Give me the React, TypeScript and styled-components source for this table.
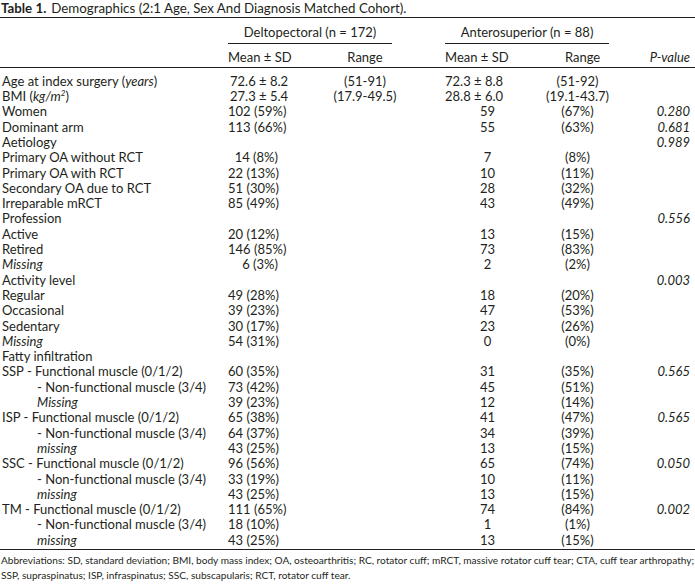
import { ReactNode } from 'react';
import styled, { createGlobalStyle } from 'styled-components';

type Row = {
  label: ReactNode;
  indent?: boolean;
  italic?: boolean;
  dMean?: string;
  dRange?: string;
  aMean?: string;
  aRange?: string;
  p?: string;
  mean?: boolean;
};

const GlobalStyles = createGlobalStyle`
  * {
    box-sizing: border-box;
    margin: 0;
    padding: 0;
  }

  body {
    background: #fff;
    font-family: Lato, 'Open Sans', sans-serif;
    color: #231f20;
  }
`;

const Page = styled.div`
  width: 695px;
`;

const Caption = styled.p`
  font-size: 13.3px;
  line-height: 16px;
  padding-left: 1px;
  margin-bottom: 0.5px;

  b {
    font-weight: 700;
    margin-right: 5px;
  }
`;

const Table = styled.table`
  width: 695px;
  table-layout: fixed;
  border-collapse: collapse;
  font-size: 13px;
  border-top: 1.5px solid #231f20;
  border-bottom: 1.5px solid #231f20;
`;

const GroupHead = styled.th<{ $left: number; $right: number }>`
  font-weight: 400;
  padding: 7px ${(p) => p.$right}px 0 ${(p) => p.$left}px;

  div {
    border-bottom: 1px solid #231f20;
    line-height: 14px;
    padding-bottom: 4px;
    text-align: center;
    white-space: nowrap;
  }
`;

const SubHead = styled.th<{ $align: string; $pad?: string }>`
  font-weight: 400;
  line-height: 14px;
  padding: ${(p) => p.$pad ?? '6px 0 3px'};
  text-align: ${(p) => p.$align};
  white-space: nowrap;
  border-bottom: 1px solid #231f20;

  &.italic {
    font-style: italic;
  }
`;

const Body = styled.tbody`
  tr:first-child td {
    padding-top: 6.3px;
  }

  tr:last-child td {
    padding-bottom: 1px;
  }
`;

const Cell = styled.td<{ $align?: string; $pad?: string }>`
  line-height: 15.3px;
  white-space: nowrap;
  vertical-align: top;
  text-align: ${(p) => p.$align ?? 'left'};
  padding: ${(p) => p.$pad ?? '0'};
`;

const Label = styled(Cell)<{ $indent?: boolean; $italic?: boolean }>`
  padding-left: ${(p) => (p.$indent ? 37 : 2)}px;
  font-style: ${(p) => (p.$italic ? 'italic' : 'normal')};
`;

const PCell = styled(Cell)`
  font-style: italic;
  text-align: right;
  padding-right: 5px;
`;

const Sup = styled.sup`
  font-size: 8px;
  line-height: 0;
  vertical-align: 5px;
`;

const Notes = styled.p`
  font-size: 10.1px;
  line-height: 15px;
  padding: 2.5px 0 0 1px;
`;

const rows: Row[] = [
  { label: <>Age at index surgery (<i>years</i>)</>, dMean: '72.6 ± 8.2', dRange: '(51-91)', aMean: '72.3 ± 8.8', aRange: '(51-92)', mean: true },
  { label: <>BMI (<i>kg/m<Sup>2</Sup></i>)</>, dMean: '27.3 ± 5.4', dRange: '(17.9-49.5)', aMean: '28.8 ± 6.0', aRange: '(19.1-43.7)', mean: true },
  { label: 'Women', dMean: '102 (59%)', aMean: '59', aRange: '(67%)', p: '0.280' },
  { label: 'Dominant arm', dMean: '113 (66%)', aMean: '55', aRange: '(63%)', p: '0.681' },
  { label: 'Aetiology', p: '0.989' },
  { label: 'Primary OA without RCT', dMean: '14 (8%)', aMean: '7', aRange: '(8%)' },
  { label: 'Primary OA with RCT', dMean: '22 (13%)', aMean: '10', aRange: '(11%)' },
  { label: 'Secondary OA due to RCT', dMean: '51 (30%)', aMean: '28', aRange: '(32%)' },
  { label: 'Irreparable mRCT', dMean: '85 (49%)', aMean: '43', aRange: '(49%)' },
  { label: 'Profession', p: '0.556' },
  { label: 'Active', dMean: '20 (12%)', aMean: '13', aRange: '(15%)' },
  { label: 'Retired', dMean: '146 (85%)', aMean: '73', aRange: '(83%)' },
  { label: 'Missing', italic: true, dMean: '6 (3%)', aMean: '2', aRange: '(2%)' },
  { label: 'Activity level', p: '0.003' },
  { label: 'Regular', dMean: '49 (28%)', aMean: '18', aRange: '(20%)' },
  { label: 'Occasional', dMean: '39 (23%)', aMean: '47', aRange: '(53%)' },
  { label: 'Sedentary', dMean: '30 (17%)', aMean: '23', aRange: '(26%)' },
  { label: 'Missing', italic: true, dMean: '54 (31%)', aMean: '0', aRange: '(0%)' },
  { label: 'Fatty infiltration' },
  { label: 'SSP - Functional muscle (0/1/2)', dMean: '60 (35%)', aMean: '31', aRange: '(35%)', p: '0.565' },
  { label: '- Non-functional muscle (3/4)', indent: true, dMean: '73 (42%)', aMean: '45', aRange: '(51%)' },
  { label: 'Missing', indent: true, italic: true, dMean: '39 (23%)', aMean: '12', aRange: '(14%)' },
  { label: 'ISP - Functional muscle (0/1/2)', dMean: '65 (38%)', aMean: '41', aRange: '(47%)', p: '0.565' },
  { label: '- Non-functional muscle (3/4)', indent: true, dMean: '64 (37%)', aMean: '34', aRange: '(39%)' },
  { label: 'missing', indent: true, italic: true, dMean: '43 (25%)', aMean: '13', aRange: '(15%)' },
  { label: 'SSC - Functional muscle (0/1/2)', dMean: '96 (56%)', aMean: '65', aRange: '(74%)', p: '0.050' },
  { label: '- Non-functional muscle (3/4)', indent: true, dMean: '33 (19%)', aMean: '10', aRange: '(11%)' },
  { label: 'missing', indent: true, italic: true, dMean: '43 (25%)', aMean: '13', aRange: '(15%)' },
  { label: 'TM - Functional muscle (0/1/2)', dMean: '111 (65%)', aMean: '74', aRange: '(84%)', p: '0.002' },
  { label: '- Non-functional muscle (3/4)', indent: true, dMean: '18 (10%)', aMean: '1', aRange: '(1%)' },
  { label: 'missing', indent: true, italic: true, dMean: '43 (25%)', aMean: '13', aRange: '(15%)' },
];

const App = () => {
  return (
    <>
      <GlobalStyles />
      <Page>
        <Caption>
          <b>Table 1.</b>Demographics (2:1 Age, Sex And Diagnosis Matched Cohort).
        </Caption>
        <Table>
          <colgroup>
            <col style={{ width: 228 }} />
            <col style={{ width: 72 }} />
            <col style={{ width: 130 }} />
            <col style={{ width: 115 }} />
            <col style={{ width: 65 }} />
            <col style={{ width: 85 }} />
          </colgroup>
          <thead>
            <tr>
              <th />
              <GroupHead colSpan={2} $left={0} $right={38}>
                <div>Deltopectoral (n = 172)</div>
              </GroupHead>
              <GroupHead colSpan={2} $left={15} $right={1}>
                <div>Anterosuperior (n = 88)</div>
              </GroupHead>
              <th />
            </tr>
            <tr>
              <SubHead $align="left" />
              <SubHead $align="left">Mean ± SD</SubHead>
              <SubHead $align="center">Range</SubHead>
              <SubHead $align="left" $pad="6px 0 3px 15px">Mean ± SD</SubHead>
              <SubHead $align="center" $pad="6px 0 3px 10px">Range</SubHead>
              <SubHead $align="right" $pad="6px 5px 3px 0" className="italic">P-value</SubHead>
            </tr>
          </thead>
          <Body>
            {rows.map((r, i) => (
              <tr key={i}>
                <Label $indent={r.indent} $italic={r.italic}>{r.label}</Label>
                <Cell $align={r.mean ? 'left' : 'right'} $pad={r.mean ? '0 0 0 2px' : '0 22px 0 0'}>{r.dMean}</Cell>
                <Cell $align="center">{r.dRange}</Cell>
                <Cell $align={r.mean ? 'left' : 'center'} $pad="0 15px">{r.aMean}</Cell>
                <Cell $align="center">{r.aRange}</Cell>
                <PCell>{r.p}</PCell>
              </tr>
            ))}
          </Body>
        </Table>
        <Notes>
          Abbreviations: SD, standard deviation; BMI, body mass index; OA, osteoarthritis; RC, rotator cuff; mRCT, massive rotator cuff tear; CTA, cuff tear arthropathy; SSP, supraspinatus; ISP, infraspinatus; SSC, subscapularis; RCT, rotator cuff tear.
        </Notes>
      </Page>
    </>
  );
};

export default App;
